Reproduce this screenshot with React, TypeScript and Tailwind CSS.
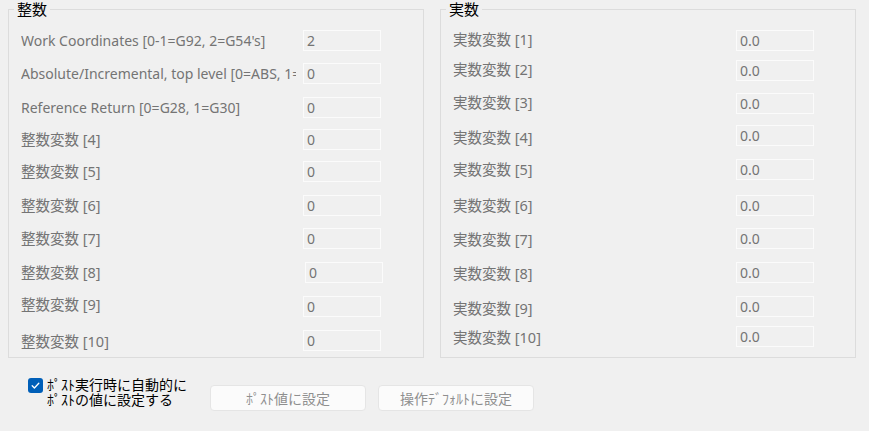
import React from "react";

type Row = { label: string; value: string; mt: string; lab?: string; inp?: string; sz?: string };

const leftRows: Row[] = [
  { label: "Work Coordinates [0-1=G92, 2=G54's]", value: "2", mt: "mt-[20px]", sz: "text-[14px]" },
  { label: "Absolute/Incremental, top level [0=ABS, 1=INC]", value: "0", mt: "mt-[12px]", sz: "text-[14px]" },
  { label: "Reference Return [0=G28, 1=G30]", value: "0", mt: "mt-[13px]", sz: "text-[14px]" },
  { label: "整数変数 [4]", value: "0", mt: "mt-[11px]", lab: "mb-[2px]" },
  { label: "整数変数 [5]", value: "0", mt: "mt-[11px]", lab: "mb-[2px]" },
  { label: "整数変数 [6]", value: "0", mt: "mt-[13px]", lab: "mb-[1px]" },
  { label: "整数変数 [7]", value: "0", mt: "mt-[12px]", lab: "mb-[2px]" },
  { label: "整数変数 [8]", value: "0", mt: "mt-[13px]", lab: "mb-[1px]", inp: "ml-[2px]" },
  { label: "整数変数 [9]", value: "0", mt: "mt-[13px]", lab: "mb-[5px]" },
  { label: "整数変数 [10]", value: "0", mt: "mt-[13px]" },
];

const rightRows: Row[] = [
  { label: "実数変数 [1]", value: "0.0", mt: "mt-[20px]", lab: "mb-[4px]" },
  { label: "実数変数 [2]", value: "0.0", mt: "mt-[9px]", lab: "mb-[3px]" },
  { label: "実数変数 [3]", value: "0.0", mt: "mt-[12px]", lab: "mb-[4px]" },
  { label: "実数変数 [4]", value: "0.0", mt: "mt-[11px]", lab: "mt-[2px]" },
  { label: "実数変数 [5]", value: "0.0", mt: "mt-[13px]", lab: "mb-[2px]" },
  { label: "実数変数 [6]", value: "0.0", mt: "mt-[15px]", lab: "mb-[1px]" },
  { label: "実数変数 [7]", value: "0.0", mt: "mt-[12px]" },
  { label: "実数変数 [8]", value: "0.0", mt: "mt-[13px]" },
  { label: "実数変数 [9]", value: "0.0", mt: "mt-[13px]", lab: "mt-[2px]" },
  { label: "実数変数 [10]", value: "0.0", mt: "mt-[9px]" },
];

function Group({
  title,
  rows,
  labelW,
  gapW,
}: {
  title: string;
  rows: Row[];
  labelW: string;
  gapW: string;
}) {
  return (
    <div className="relative w-[416px] h-[349px] border border-[#dcdcdc]">
      <span className="absolute left-[5px] top-[-10px] px-[3px] bg-[#f0f0f0] text-[15px] leading-[18px] text-black">
        {title}
      </span>
      <div className="flex flex-col pl-[12px]">
        {rows.map((r) => (
          <div key={r.label} className={`flex items-center h-[21px] ${r.mt}`}>
            <div
              className={`${labelW} ${gapW} shrink-0 overflow-hidden whitespace-nowrap ${r.sz ?? "text-[14.5px]"} leading-[18px] text-[#747474] ${r.lab ?? ""}`}
            >
              {r.label}
            </div>
            <div
              className={`w-[78px] h-[21px] shrink-0 border border-[#fbfbfb] bg-[#f0f0f0] pl-[3px] text-[14px] leading-[19px] text-[#747474] ${r.inp ?? ""}`}
            >
              {r.value}
            </div>
          </div>
        ))}
      </div>
    </div>
  );
}

export default function App() {
  return (
    <div
      className="w-[869px] h-[431px] bg-[#f0f0f0] overflow-hidden"
      style={{ fontFamily: '"Noto Sans", "Noto Sans CJK JP", sans-serif' }}
    >
      <div className="flex gap-[16px] pl-[8px] pt-[9px]">
        <Group title="整数" rows={leftRows} labelW="w-[275px]" gapW="mr-[7px]" />
        <Group title="実数" rows={rightRows} labelW="w-[283px]" gapW="mr-0" />
      </div>
      <div className="flex items-start pl-[28px] mt-[19px]">
        <div className="flex items-start w-[182px]">
          <div className="mt-[1px] w-[15px] h-[15px] rounded-[3px] bg-[#005fb8] flex items-center justify-center shrink-0">
            <svg width="11" height="11" viewBox="0 0 11 11" fill="none">
              <path d="M2.2 5.8 L4.4 8 L8.8 3.2" stroke="white" strokeWidth="1.3" strokeLinecap="round" strokeLinejoin="round" />
            </svg>
          </div>
          <div className="ml-[4px] text-[14px] leading-[15px] text-black whitespace-nowrap">
            ﾎﾟｽﾄ実行時に自動的に
            <br />
            ﾎﾟｽﾄの値に設定する
          </div>
        </div>
        <div className="flex gap-[12px] mt-[8px]">
          <div className="w-[156px] h-[26px] rounded-[4px] border border-[#e5e5e5] bg-[#fbfbfb] flex items-center justify-center text-[14px] text-[#8f8f8f]">
            ﾎﾟｽﾄ値に設定
          </div>
          <div className="w-[156px] h-[26px] rounded-[4px] border border-[#e5e5e5] bg-[#fbfbfb] flex items-center justify-center text-[14px] text-[#8f8f8f]">
            操作ﾃﾞﾌｫﾙﾄに設定
          </div>
        </div>
      </div>
    </div>
  );
}
